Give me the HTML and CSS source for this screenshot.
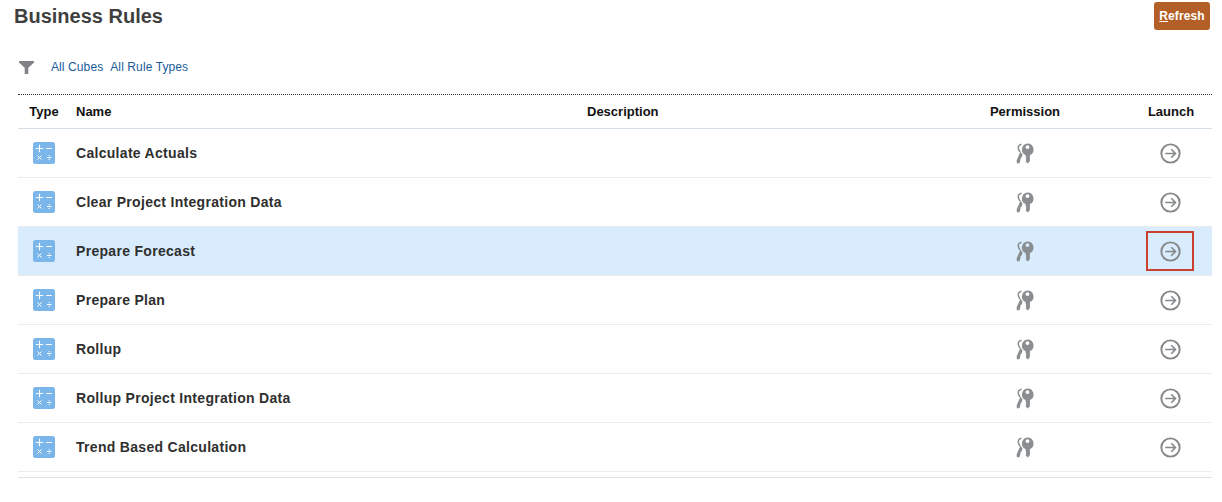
FILE: index.html
```html
<!DOCTYPE html>
<html lang="en">
<head>
<meta charset="utf-8">
<title>Business Rules</title>
<link rel="stylesheet" href="styles.css">
</head>
<body>
<svg class="defs" width="0" height="0" aria-hidden="true">
  <defs>
    <symbol id="calc" viewBox="0 0 22 22">
      <rect width="22" height="22" rx="2.5" fill="#7ab6ea"/>
      <path d="M2.8 6.5h7.4M6.5 2.8v7.4M13.2 6.5h5.6" stroke="#fff" stroke-width="1.1" fill="none"/>
      <path d="M4.5 13.5l4 4M8.5 13.5l-4 4M14 15.5h4.5" stroke="#fff" stroke-width="1" fill="none"/>
      <circle cx="16.2" cy="13.6" r=".7" fill="#fff"/>
      <circle cx="16.2" cy="17.4" r=".7" fill="#fff"/>
    </symbol>
    <symbol id="keys" viewBox="0 0 18 21">
      <path d="M5.6 1.2C2.8 1.4 1.6 4 2.6 6.4L4 9.2" fill="none" stroke="#8b8e90" stroke-width="1.5"/>
      <path d="M4.4 8.8 6.6 11.6 5.6 14.4 4.6 15.2 4.4 17 3.6 20 1 20.6 .6 17.6Z" fill="#8b8e90"/>
      <path fill-rule="evenodd" d="M11.5 0.6a6 6 0 0 1 2.4 11.5V18l-2 2.6-2.3-2.2.8-1.3-.8-1.1.8-1.1-.8-1.1V12.1A6 6 0 0 1 11.5 .6ZM11.5 2.2a1.9 1.9 0 1 0 .01 0Z" fill="#8b8e90"/>
    </symbol>
    <symbol id="go" viewBox="0 0 22 22">
      <circle cx="11" cy="11" r="9.6" fill="none" stroke="#85888a" stroke-width="2"/>
      <path d="M5.5 11h10.5M11.8 6.6l4.4 4.4-4.4 4.4" fill="none" stroke="#85888a" stroke-width="1.7"/>
    </symbol>
  </defs>
</svg>

<header class="page-head">
  <h1 class="title">Business Rules</h1>
  <button class="refresh" type="button"><span class="mnemonic">R</span>efresh</button>
</header>

<div class="filters">
  <svg class="funnel" viewBox="0 0 15 13" width="15" height="13" aria-hidden="true">
    <path d="M0 0h15v1.5L9.3 6.8V13H5.7V6.8L0 1.5Z" fill="#808285"/>
  </svg>
  <a class="filter-link" href="#">All Cubes</a>
  <a class="filter-link" href="#">All Rule Types</a>
</div>

<section class="rules">
  <div class="row head">
    <div class="cell center">Type</div>
    <div class="cell name">Name</div>
    <div class="cell name">Description</div>
    <div class="cell center">Permission</div>
    <div class="cell center">Launch</div>
  </div>

  <div class="row item">
    <div class="cell center"><svg class="ic-calc"><use href="#calc"/></svg></div>
    <div class="cell name">Calculate Actuals</div>
    <div class="cell"></div>
    <div class="cell center"><svg class="ic-keys"><use href="#keys"/></svg></div>
    <div class="cell center"><svg class="ic-go"><use href="#go"/></svg></div>
  </div>
  <div class="row item">
    <div class="cell center"><svg class="ic-calc"><use href="#calc"/></svg></div>
    <div class="cell name">Clear Project Integration Data</div>
    <div class="cell"></div>
    <div class="cell center"><svg class="ic-keys"><use href="#keys"/></svg></div>
    <div class="cell center"><svg class="ic-go"><use href="#go"/></svg></div>
  </div>
  <div class="row item selected">
    <div class="cell center"><svg class="ic-calc"><use href="#calc"/></svg></div>
    <div class="cell name">Prepare Forecast</div>
    <div class="cell"></div>
    <div class="cell center"><svg class="ic-keys"><use href="#keys"/></svg></div>
    <div class="cell center launch-marked"><svg class="ic-go"><use href="#go"/></svg><span class="marker"></span></div>
  </div>
  <div class="row item">
    <div class="cell center"><svg class="ic-calc"><use href="#calc"/></svg></div>
    <div class="cell name">Prepare Plan</div>
    <div class="cell"></div>
    <div class="cell center"><svg class="ic-keys"><use href="#keys"/></svg></div>
    <div class="cell center"><svg class="ic-go"><use href="#go"/></svg></div>
  </div>
  <div class="row item">
    <div class="cell center"><svg class="ic-calc"><use href="#calc"/></svg></div>
    <div class="cell name">Rollup</div>
    <div class="cell"></div>
    <div class="cell center"><svg class="ic-keys"><use href="#keys"/></svg></div>
    <div class="cell center"><svg class="ic-go"><use href="#go"/></svg></div>
  </div>
  <div class="row item">
    <div class="cell center"><svg class="ic-calc"><use href="#calc"/></svg></div>
    <div class="cell name">Rollup Project Integration Data</div>
    <div class="cell"></div>
    <div class="cell center"><svg class="ic-keys"><use href="#keys"/></svg></div>
    <div class="cell center"><svg class="ic-go"><use href="#go"/></svg></div>
  </div>
  <div class="row item">
    <div class="cell center"><svg class="ic-calc"><use href="#calc"/></svg></div>
    <div class="cell name">Trend Based Calculation</div>
    <div class="cell"></div>
    <div class="cell center"><svg class="ic-keys"><use href="#keys"/></svg></div>
    <div class="cell center"><svg class="ic-go"><use href="#go"/></svg></div>
  </div>
</section>
</body>
</html>
```

FILE: styles.css
```css
* { box-sizing: border-box; }

html, body {
  margin: 0;
  padding: 0;
  background: #fff;
}

body {
  font-family: "Liberation Sans", Arial, sans-serif;
  height: 502px;
  overflow: hidden;
  color: #333;
}

.defs { position: absolute; }

.page-head {
  display: flex;
  justify-content: space-between;
  align-items: flex-start;
  padding: 2px 12px 0 14px;
  height: 47px;
}

.title {
  margin: 0;
  font-size: 20px;
  line-height: 28px;
  font-weight: 700;
  color: #3f3f3f;
}

.refresh {
  width: 56px;
  height: 28px;
  padding: 0;
  border: 0;
  border-radius: 3px;
  background: #b35f27;
  color: #fff;
  font: 700 12px "Liberation Sans", Arial, sans-serif;
  letter-spacing: .1px;
}

.mnemonic { text-decoration: underline; }

.filters {
  display: flex;
  align-items: center;
  height: 40px;
  padding-left: 19px;
}

.funnel { margin-right: 17px; }

.filter-link {
  margin-right: 7px;
  font-size: 12px;
  letter-spacing: .1px;
  color: #1a5c9c;
  text-decoration: none;
}

.rules {
  margin: 7px 10px 0 18px;
  border-top: 1px dotted #333;
  border-bottom: 1px solid #dfe3e8;
  padding-bottom: 5px;
}

.row {
  display: grid;
  grid-template-columns: 52px 511px 339px 210px 82px;
  align-items: center;
}

.head {
  height: 34px;
  border-bottom: 1px solid #d6dfe8;
  font-size: 13px;
  font-weight: 700;
  color: #111;
}

.item {
  height: 49px;
  border-bottom: 1px solid #ececec;
  font-size: 14px;
  letter-spacing: .3px;
  font-weight: 700;
  color: #2f2f2f;
}

.selected { background: #d8ecfe; }

.cell { min-width: 0; }
.center {
  display: flex;
  justify-content: center;
  align-items: center;
}
.name { padding-left: 6px; }

.ic-calc { width: 22px; height: 22px; display: block; }
.ic-keys { width: 18px; height: 21px; display: block; }
.ic-go { width: 21px; height: 21px; display: block; margin-right: 2px; }

.launch-marked { position: relative; }
.marker {
  position: absolute;
  left: 16px;
  top: calc(50% - 20px);
  width: 48px;
  height: 40px;
  border: 2px solid #c8402e;
}
```
